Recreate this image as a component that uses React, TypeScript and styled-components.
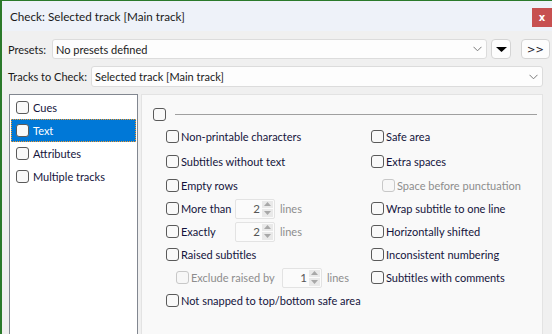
import React from 'react';
import styled, { createGlobalStyle } from 'styled-components';

const Global = createGlobalStyle`
  html, body { margin: 0; padding: 0; background: #f0f0f0; }
  body {
    font-family: Lato, "Liberation Sans", sans-serif;
    font-size: 11px;
    color: #1a1a1a;
  }
  * { box-sizing: border-box; }
`;

const Window = styled.div`
  width: 552px;
  height: 334px;
  overflow: hidden;
  border-top: 1px solid #2b7a2b;
  border-left: 2px solid #2b7a2b;
  display: flex;
  flex-direction: column;
  background: #f0f0f0;
`;

const TitleBar = styled.div`
  height: 30px;
  flex: none;
  background: #eef2f9;
  display: flex;
  align-items: center;
  justify-content: space-between;
  padding-left: 8px;
`;

const Title = styled.span`
  font-size: 11.7px;
  color: #1a1a1a;
`;

const CloseBtn = styled.div`
  width: 20px;
  height: 19px;
  margin-top: 3px;
  background: #c75050;
  color: #fff;
  font-family: "DejaVu Sans", sans-serif;
  font-weight: bold;
  font-size: 10px;
  display: flex;
  align-items: center;
  justify-content: center;
`;

const Body = styled.div`
  flex: 1;
  display: flex;
  flex-direction: column;
  padding: 8px 2px 0 6px;
  min-height: 0;
`;

const Row = styled.div<{ $h: number; $mt?: number; $mr?: number }>`
  display: flex;
  align-items: center;
  height: ${(p) => p.$h}px;
  margin-top: ${(p) => p.$mt ?? 0}px;
  margin-right: ${(p) => p.$mr ?? 0}px;
  flex: none;
`;

const Label = styled.span<{ $w: number }>`
  width: ${(p) => p.$w}px;
  flex: none;
  white-space: nowrap;
`;

const Combo = styled.div`
  flex: 1;
  height: 100%;
  background: #fdfdfd;
  border: 1px solid #dcdcdc;
  border-radius: 3px;
  display: flex;
  align-items: center;
  justify-content: space-between;
  padding: 0 4px 0 3px;
  white-space: nowrap;
`;

const Chevron = () => (
  <svg width="9" height="6" viewBox="0 0 9 6">
    <path d="M0.5 0.8 L4.5 4.8 L8.5 0.8" fill="none" stroke="#7a7a7a" strokeWidth="1" />
  </svg>
);

const SmallButton = styled.div<{ $w: number; $ml: number }>`
  width: ${(p) => p.$w}px;
  height: 100%;
  margin-left: ${(p) => p.$ml}px;
  flex: none;
  background: #fdfdfd;
  border: 1px solid #d4d4d4;
  border-radius: 4px;
  display: flex;
  align-items: center;
  justify-content: center;
  font-family: "DejaVu Sans", sans-serif;
  font-size: 10px;
  color: #1a1a2a;
`;

const Main = styled.div`
  flex: 1;
  display: flex;
  gap: 3px;
  margin: 7px 7px 0 1px;
  min-height: 0;
`;

const ListBox = styled.div`
  width: 129px;
  flex: none;
  background: #fff;
  border: 1px solid #828790;
  border-bottom: none;
  padding: 1px;
  display: flex;
  flex-direction: column;
`;

const ListItem = styled.div<{ $selected?: boolean }>`
  height: 23px;
  display: flex;
  align-items: center;
  gap: 4px;
  padding-left: ${(p) => (p.$selected ? 4 : 5)}px;
  background: ${(p) => (p.$selected ? '#0078d7' : 'transparent')};
  border: ${(p) => (p.$selected ? '1px dotted #f29b2e' : 'none')};
  color: ${(p) => (p.$selected ? '#fff' : '#14143c')};
`;

const Box = styled.span<{ $disabled?: boolean }>`
  width: 13px;
  height: 13px;
  flex: none;
  border: 1px solid ${(p) => (p.$disabled ? '#c8c8c8' : '#5a5a5a')};
  border-radius: 3px;
  background: ${(p) => (p.$disabled ? '#f7f7f7' : '#f9f9f9')};
`;

const Panel = styled.div`
  flex: 1;
  background: #f9f9f9;
  border: 1px solid #e3e3e3;
  border-bottom: none;
  padding: 13px 5px 0 11px;
`;

const Header = styled.div`
  display: flex;
  align-items: center;
  gap: 9px;
  height: 13px;
`;

const Rule = styled.div`
  flex: 1;
  height: 1px;
  background: #a0a0a0;
`;

const Grid = styled.div`
  display: grid;
  grid-template-columns: 205px 1fr;
  grid-template-rows: 25px 24px 24px 23px 23px 23px 23px 23px;
  margin-top: 3px;
  padding-left: 13px;
`;

const Item = styled.div<{ $indent?: number; $disabled?: boolean }>`
  display: flex;
  align-items: center;
  gap: 2px;
  padding-left: ${(p) => p.$indent ?? 0}px;
  color: ${(p) => (p.$disabled ? '#8d8d8d' : '#14143c')};
  white-space: nowrap;
`;

const FixedText = styled.span<{ $w: number }>`
  width: ${(p) => p.$w}px;
  flex: none;
`;

const Spin = styled.div`
  width: 40px;
  height: 20px;
  flex: none;
  background: #fbfbfb;
  border: 1px solid #e3e3e3;
  border-radius: 2px;
  display: flex;
  align-items: stretch;
  margin-right: 3px;
`;

const SpinValue = styled.span`
  flex: 1;
  text-align: right;
  padding-right: 2px;
  line-height: 18px;
  font-size: 11.5px;
  color: #555;
`;

const SpinArrows = styled.div`
  width: 12px;
  display: flex;
  flex-direction: column;
  gap: 1px;
  padding: 1px 1px 1px 0;
`;

const ArrowCell = styled.div`
  flex: 1;
  background: #e9e9e9;
  display: flex;
  align-items: center;
  justify-content: center;
`;

const Muted = styled.span`
  color: #8d8d8d;
`;

const Arrow = ({ up }: { up?: boolean }) => (
  <svg width="7" height="4" viewBox="0 0 7 4">
    <path d={up ? 'M0 4 L3.5 0 L7 4 Z' : 'M0 0 L3.5 4 L7 0 Z'} fill="#a8a8a8" />
  </svg>
);

const SpinBox = ({ value }: { value: number }) => (
  <Spin>
    <SpinValue>{value}</SpinValue>
    <SpinArrows>
      <ArrowCell><Arrow up /></ArrowCell>
      <ArrowCell><Arrow /></ArrowCell>
    </SpinArrows>
  </Spin>
);

const Empty = styled.div``;

export default function App() {
  return (
    <>
      <Global />
      <Window>
        <TitleBar>
          <Title>Check: Selected track [Main track]</Title>
          <CloseBtn>x</CloseBtn>
        </TitleBar>
        <Body>
          <Row $h={20}>
            <Label $w={44}>Presets:</Label>
            <Combo>
              <span>No presets defined</span>
              <Chevron />
            </Combo>
            <SmallButton $w={20} $ml={4}>
              <svg width="11" height="5" viewBox="0 0 11 5">
                <path d="M0 0 L11 0 L5.5 5 Z" fill="#000" />
              </svg>
            </SmallButton>
            <SmallButton $w={29} $ml={10}>&gt;&gt;</SmallButton>
          </Row>
          <Row $h={21} $mt={7} $mr={7}>
            <Label $w={83}>Tracks to Check:</Label>
            <Combo>
              <span>Selected track [Main track]</span>
              <Chevron />
            </Combo>
          </Row>
          <Main>
            <ListBox>
              <ListItem><Box />Cues</ListItem>
              <ListItem $selected><Box />Text</ListItem>
              <ListItem><Box />Attributes</ListItem>
              <ListItem><Box />Multiple tracks</ListItem>
            </ListBox>
            <Panel>
              <Header>
                <Box />
                <Rule />
              </Header>
              <Grid>
                <Item><Box />Non-printable characters</Item>
                <Item><Box />Safe area</Item>
                <Item><Box />Subtitles without text</Item>
                <Item><Box />Extra spaces</Item>
                <Item><Box />Empty rows</Item>
                <Item $indent={11} $disabled><Box $disabled />Space before punctuation</Item>
                <Item><Box /><FixedText $w={52}>More than</FixedText><SpinBox value={2} /><Muted>lines</Muted></Item>
                <Item><Box />Wrap subtitle to one line</Item>
                <Item><Box /><FixedText $w={52}>Exactly</FixedText><SpinBox value={2} /><Muted>lines</Muted></Item>
                <Item><Box />Horizontally shifted</Item>
                <Item><Box />Raised subtitles</Item>
                <Item><Box />Inconsistent numbering</Item>
                <Item $indent={10} $disabled><Box $disabled /><FixedText $w={89}>Exclude raised by</FixedText><SpinBox value={1} /><Muted>lines</Muted></Item>
                <Item><Box />Subtitles with comments</Item>
                <Item><Box />Not snapped to top/bottom safe area</Item>
                <Empty />
              </Grid>
            </Panel>
          </Main>
        </Body>
      </Window>
    </>
  );
}
